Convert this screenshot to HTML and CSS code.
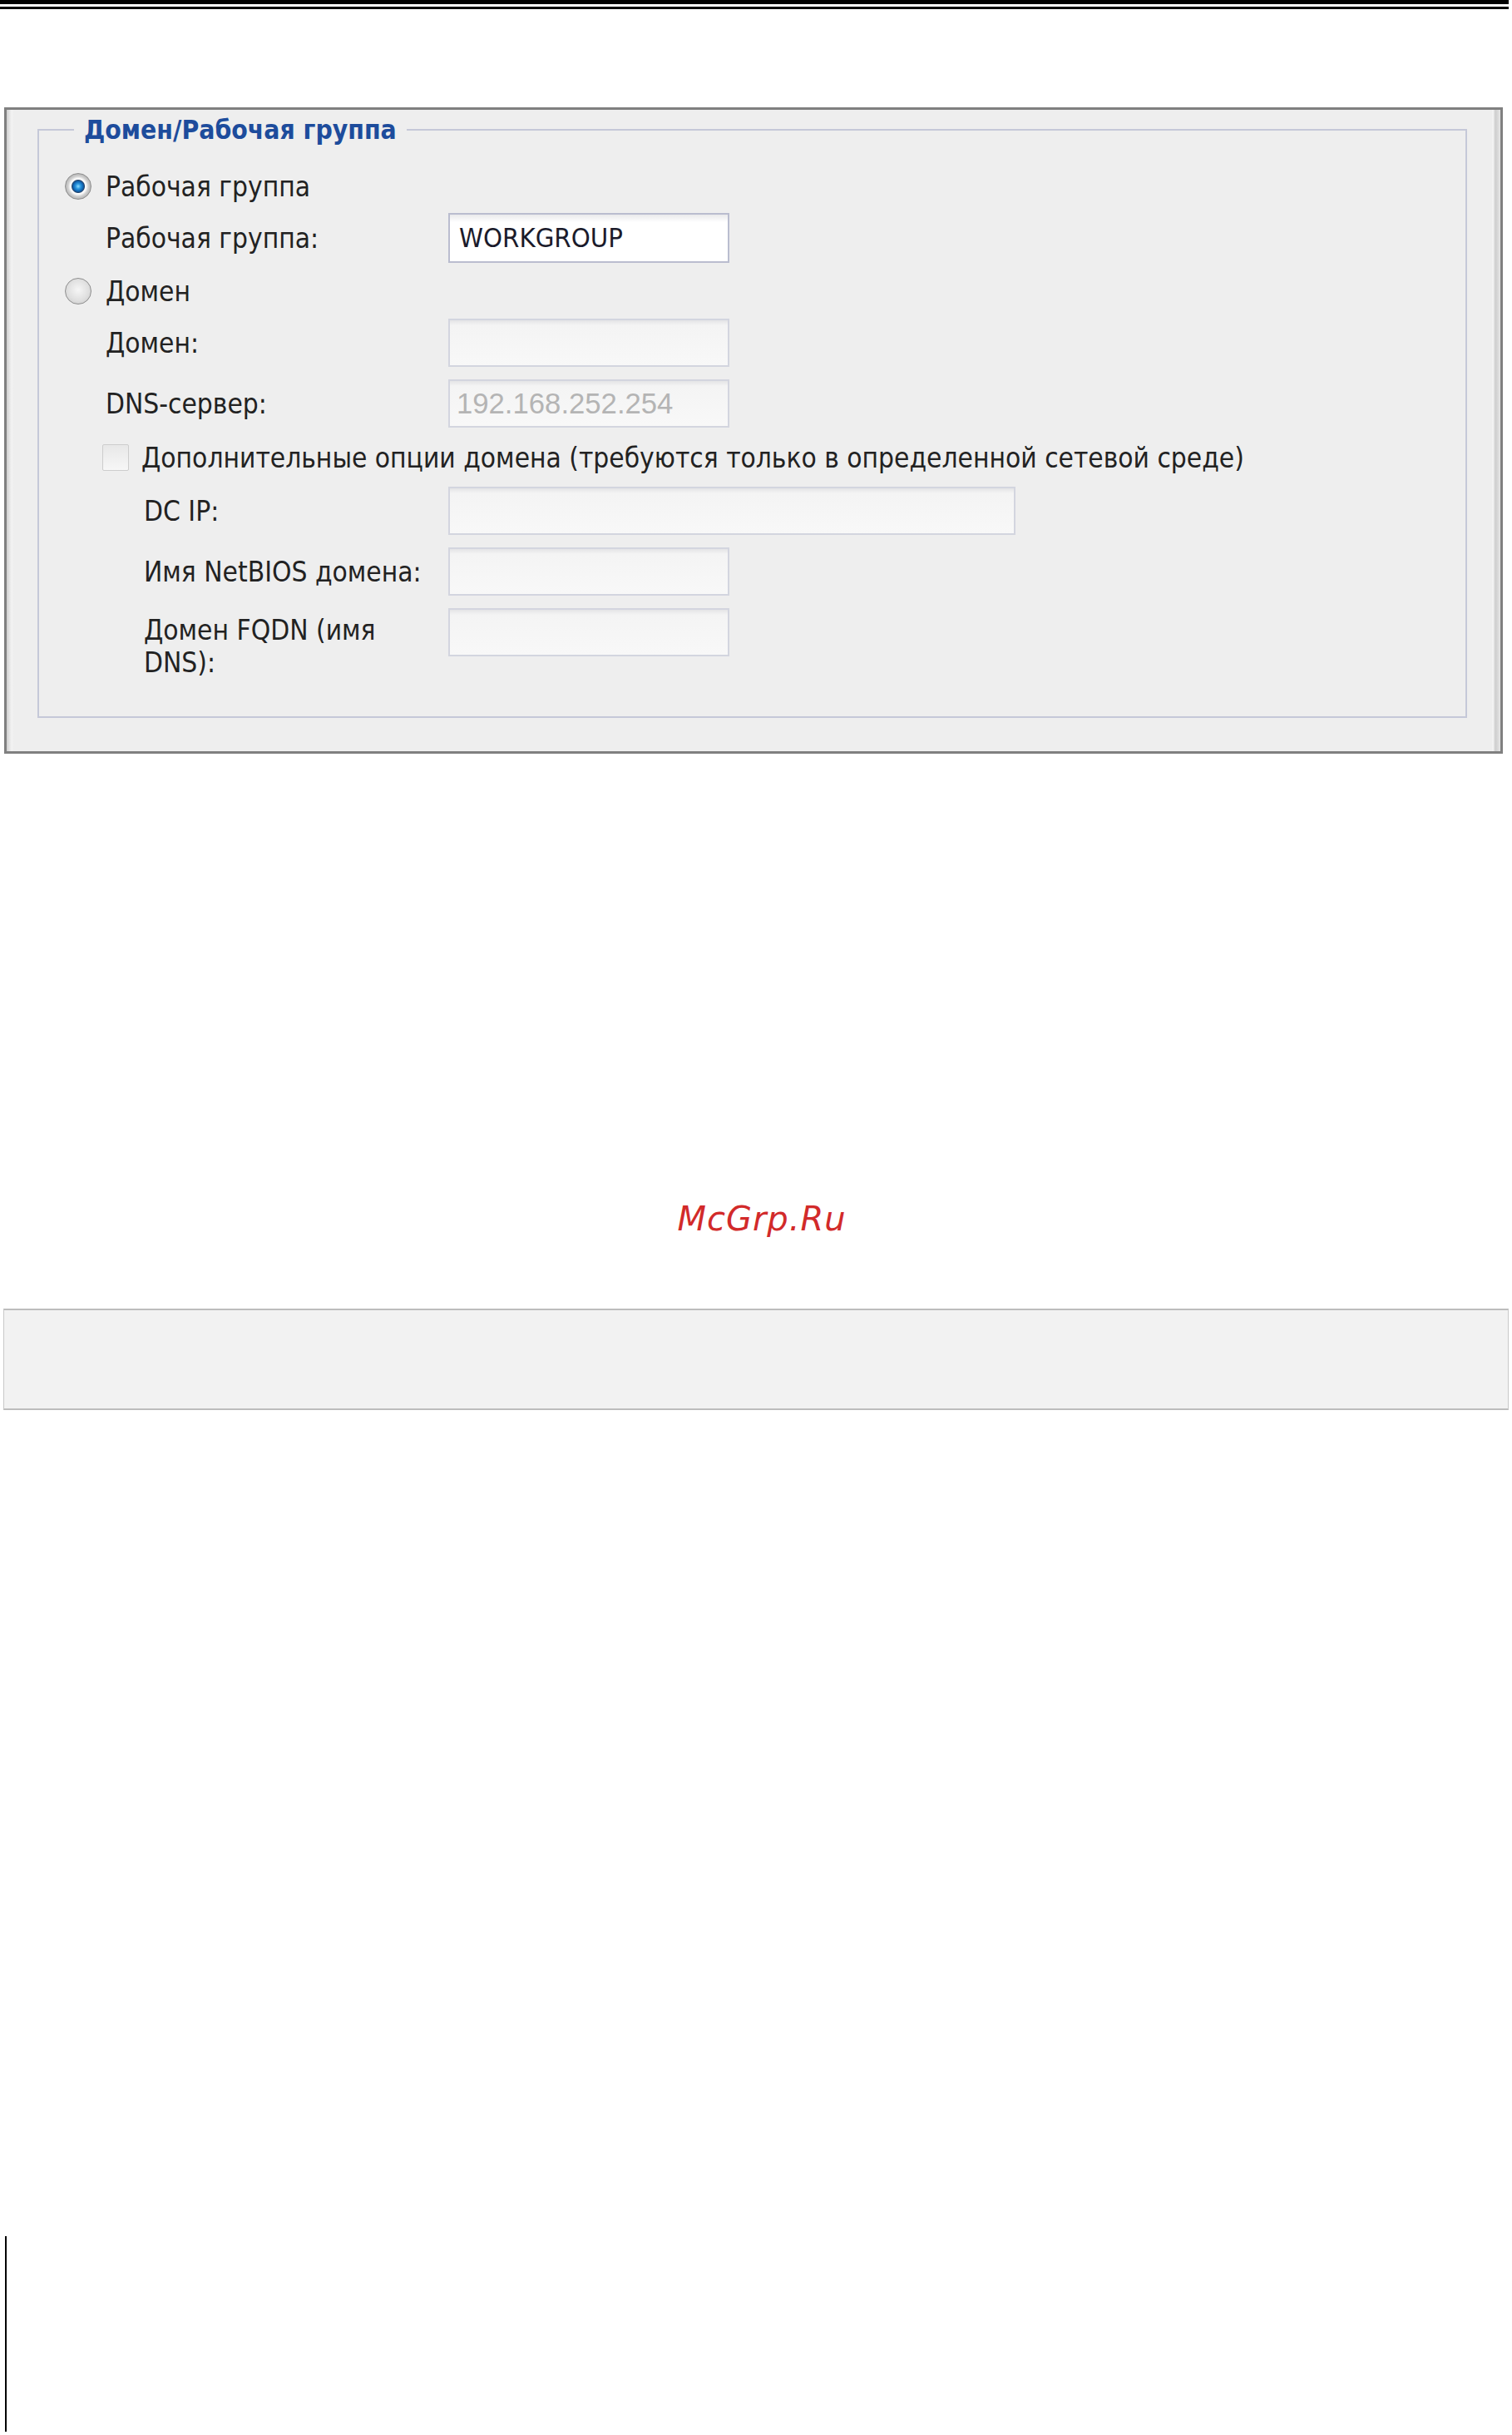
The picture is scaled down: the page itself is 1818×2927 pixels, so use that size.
FILE: index.html
```html
<!DOCTYPE html>
<html lang="ru">
<head>
    <meta charset="UTF-8">
    <meta name="viewport" content="width=device-width, initial-scale=1.0">
    <title>Домен/Рабочая группа</title>
    <link rel="stylesheet" href="styles.css">
</head>
<body>
    <div class="rule-thick"></div>
    <div class="rule-thin"></div>

    <div class="window">
        <fieldset class="group">
            <legend>Домен/Рабочая группа</legend>

            <div class="row option">
                <input type="radio" name="mode" id="modeWorkgroup" checked>
                <label for="modeWorkgroup">Рабочая группа</label>
            </div>
            <div class="row field">
                <label for="workgroup">Рабочая группа:</label>
                <input type="text" id="workgroup" class="active" value="WORKGROUP">
            </div>

            <div class="row option">
                <input type="radio" name="mode" id="modeDomain">
                <label for="modeDomain">Домен</label>
            </div>
            <div class="row field">
                <label for="domain">Домен:</label>
                <input type="text" id="domain" disabled>
            </div>
            <div class="row field">
                <label for="dns">DNS-сервер:</label>
                <input type="text" id="dns" value="192.168.252.254" disabled>
            </div>

            <div class="row check">
                <input type="checkbox" id="advanced" disabled>
                <label for="advanced">Дополнительные опции домена (требуются только в определенной сетевой среде)</label>
            </div>
            <div class="row field sub">
                <label for="dcip">DC IP:</label>
                <input type="text" id="dcip" class="long" disabled>
            </div>
            <div class="row field sub">
                <label for="netbios">Имя NetBIOS домена:</label>
                <input type="text" id="netbios" disabled>
            </div>
            <div class="row field sub multi">
                <label for="fqdn">Домен FQDN (имя DNS):</label>
                <input type="text" id="fqdn" disabled>
            </div>
        </fieldset>
    </div>

    <div class="mark">McGrp.Ru</div>

    <div class="note-box"></div>

    <div class="edge"></div>
</body>
</html>
```

FILE: styles.css
```css
body {
    margin: 0;
    background: #fff;
    font-family: "DejaVu Sans Condensed", "DejaVu Sans", sans-serif;
    font-stretch: condensed;
    font-size: 33.2px;
    line-height: 39px;
    color: #222;
}

/* double rule at the top of the page */
.rule-thick {
    height: 5px;
    margin-right: 4px;
    background: #000;
}
.rule-thin {
    height: 3px;
    margin: 3px 4px 0 0;
    background: #000;
}

/* dialog frame with bevelled side edges */
.window {
    width: 1802px;
    box-sizing: border-box;
    margin: 118px 0 0 5px;
    padding: 6px 40px 40px 37px;
    border: 3px solid #808080;
    background: linear-gradient(to right,
        #cfcfcf 0, #e2e2e2 3px, #f3f3f3 6px, #eeeeee 8px,
        #eeeeee calc(100% - 10px), #f7f7f7 calc(100% - 9px),
        #cdcdcd calc(100% - 6px), #dadada calc(100% - 3px), #e6e6e6 100%);
}

.group {
    margin: 0;
    min-width: 0;
    padding: 33px 31px 45px;
    border: 2px solid #c5c8d8;
}
.group legend {
    margin-left: 11px;
    padding: 0 12px;
    font-size: 31.6px;
    font-weight: bold;
    line-height: 36px;
    color: #1d4c9c;
}

.row {
    display: flex;
    align-items: center;
}
.option {
    height: 34px;
    margin-top: 18px;
}
.option:first-of-type {
    margin-top: 0;
}
.field {
    height: 58px;
    margin-top: 15px;
}
.option + .field {
    margin-top: 16px;
}
.check {
    height: 32px;
    margin-top: 20px;
}
.check + .field {
    margin-top: 19px;
}

.field label {
    flex: none;
    width: 461px;
    box-sizing: border-box;
    padding: 0 12px 0 49px;
}
.sub label {
    padding-left: 95px;
}
.multi {
    height: auto;
    align-items: flex-start;
}
.multi label {
    padding-top: 7px;
}

.field input {
    width: 338px;
    height: 58px;
    box-sizing: border-box;
    margin: 0;
    padding: 0 8px;
    border: 2px solid #d3d5df;
    border-radius: 0;
    background: linear-gradient(#e4e4e6, #f4f4f4 6px, #f8f8f8);
    font: 34.7px "Liberation Sans", Arial, sans-serif;
    color: #b4b4b4;
    -webkit-text-fill-color: #b4b4b4;
    opacity: 1;
}
.field input.active {
    height: 60px;
    padding: 0 11px;
    border-color: #babdcf;
    background: linear-gradient(#e9e9eb, #ffffff 9px);
    font-family: "DejaVu Sans Condensed", "DejaVu Sans", sans-serif;
    font-stretch: condensed;
    font-size: 32.6px;
    color: #1b1b2b;
    -webkit-text-fill-color: #1b1b2b;
}
.field input.long {
    width: 682px;
}

input[type="radio"] {
    appearance: none;
    flex: none;
    width: 32px;
    height: 32px;
    margin: 0 17px 0 0;
    border: 1px solid #8e8e8e;
    border-radius: 50%;
    background: radial-gradient(circle at 50% 45%, #f6f6f6 0, #e0e0e0 55%, #c4c4c4 100%);
}
input[type="radio"]:checked {
    background: radial-gradient(circle at 50% 50%,
        #8fdcff 0, #2b98e0 3px, #0e62b0 6px, #27476e 7.5px,
        #ffffff 8.5px, #f4f4f4 10px, #d2d2d2 12px, #b8b8b8 15px);
}

input[type="checkbox"] {
    appearance: none;
    flex: none;
    width: 32px;
    height: 32px;
    margin: 0 15px 0 45px;
    border: 1px solid #cdcdcd;
    border-radius: 2px;
    background: linear-gradient(#e8e8e8, #f7f7f7);
}

/* watermark */
.mark {
    margin-top: 535px;
    padding-left: 14px;
    text-align: center;
    font-family: "DejaVu Sans", sans-serif;
    font-stretch: normal;
    font-style: italic;
    font-size: 40px;
    line-height: 48px;
    letter-spacing: 1px;
    color: #d22a2a;
}

.note-box {
    width: 1810px;
    height: 122px;
    box-sizing: border-box;
    margin: 84px 0 0 4px;
    border: 1px solid #c9c9c9;
    border-top: 2px solid #bdbdbd;
    border-bottom: 2px solid #bdbdbd;
    background: #f2f2f2;
}

.edge {
    width: 2px;
    height: 235px;
    margin: 993px 0 0 6px;
    background: #000;
}
```
